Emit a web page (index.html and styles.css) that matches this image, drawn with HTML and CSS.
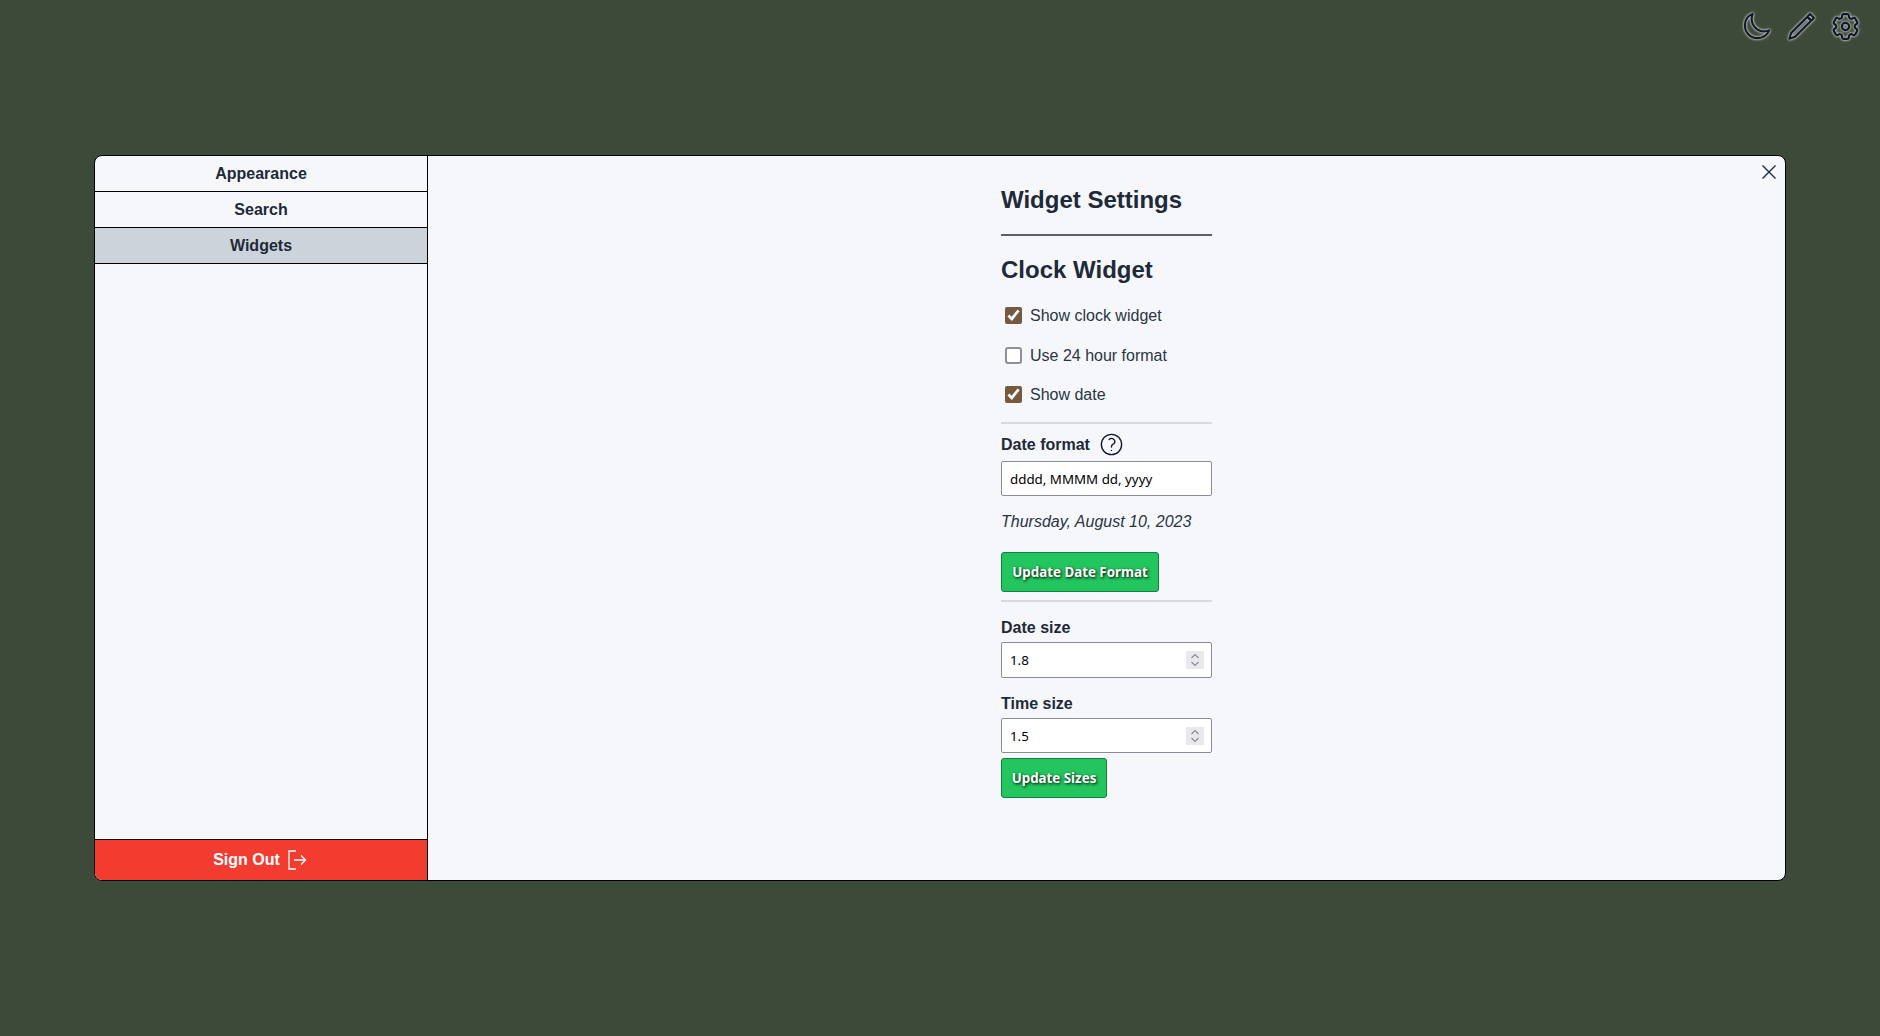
FILE: index.html
```html
<!DOCTYPE html>
<html lang="en">
<head>
<meta charset="UTF-8">
<meta name="viewport" content="width=device-width, initial-scale=1.0">
<title>Widget Settings</title>
<link rel="stylesheet" href="styles.css">
</head>
<body>

<div class="toolbar">
  <button class="tool-btn" aria-label="Dark mode">
    <svg class="moon" viewBox="0 0 24 24"><path d="M21.752 15.002A9.718 9.718 0 0118 15.75c-5.385 0-9.75-4.365-9.75-9.75 0-1.33.266-2.597.748-3.752A9.753 9.753 0 003 11.25C3 16.635 7.365 21 12.75 21a9.753 9.753 0 009.002-5.998z"/></svg>
  </button>
  <button class="tool-btn" aria-label="Edit">
    <svg class="pencil" viewBox="0 0 24 24"><path d="M18.6 2.400l3 3-1.900 1.900-3-3zM16.400 4.600l3 3L7 20l-4.400 1.400L4 17z"/></svg>
  </button>
  <button class="tool-btn" aria-label="Settings">
    <svg class="gear" viewBox="0 0 24 24"><path d="M9.594 3.94c.09-.542.56-.94 1.11-.94h2.593c.55 0 1.02.398 1.11.94l.213 1.281c.063.374.313.686.645.87.074.04.147.083.22.127.324.196.72.257 1.075.124l1.217-.456a1.125 1.125 0 011.37.49l1.296 2.247a1.125 1.125 0 01-.26 1.431l-1.003.827c-.293.24-.438.613-.431.992a6.759 6.759 0 010 .255c-.007.378.138.75.43.99l1.005.828c.424.35.534.954.26 1.43l-1.298 2.247a1.125 1.125 0 01-1.369.491l-1.217-.456c-.355-.133-.75-.072-1.076.124a6.57 6.57 0 01-.22.128c-.331.183-.581.495-.644.869l-.213 1.28c-.09.543-.56.941-1.11.941h-2.594c-.55 0-1.02-.398-1.11-.94l-.213-1.281c-.062-.374-.312-.686-.644-.87a6.52 6.52 0 01-.22-.127c-.325-.196-.72-.257-1.076-.124l-1.217.456a1.125 1.125 0 01-1.369-.49l-1.297-2.247a1.125 1.125 0 01.26-1.431l1.004-.827c.292-.24.437-.613.43-.992a6.932 6.932 0 010-.255c.007-.378-.138-.75-.43-.99l-1.004-.828a1.125 1.125 0 01-.26-1.43l1.297-2.247a1.125 1.125 0 011.37-.491l1.216.456c.356.133.751.072 1.076-.124.072-.044.146-.087.22-.128.332-.183.582-.495.644-.869l.214-1.281z"/><circle cx="12" cy="12" r="2.6"/></svg>
  </button>
</div>

<div class="modal">
  <div class="sidebar">
    <button class="side-item">Appearance</button>
    <button class="side-item">Search</button>
    <button class="side-item active">Widgets</button>
    <div class="side-space"></div>
    <button class="sign-out">
      Sign Out
      <svg viewBox="0 0 20 20"><path d="M9 1H2v18h7M7 10h11.500M14 5.500l4.500 4.500-4.500 4.500"/></svg>
    </button>
  </div>

  <div class="panel">
    <button class="close" aria-label="Close">
      <svg viewBox="0 0 16 16"><path d="M1.500 1.500l13 13M14.500 1.500l-13 13"/></svg>
    </button>

    <div class="settings">
      <h1>Widget Settings</h1>
      <hr class="rule-dark">
      <h2>Clock Widget</h2>

      <label class="check-row first"><input type="checkbox" checked> Show clock widget</label>
      <label class="check-row second"><input type="checkbox"> Use 24 hour format</label>
      <label class="check-row third"><input type="checkbox" checked> Show date</label>

      <hr class="rule-light">

      <div class="field-label with-help">
        Date format
        <svg viewBox="0 0 24 24"><path d="M9.879 7.519c1.171-1.025 3.071-1.025 4.242 0 1.172 1.025 1.172 2.687 0 3.712-.203.179-.43.326-.67.442-.745.361-1.45.999-1.45 1.827v.75M21 12a9 9 0 11-18 0 9 9 0 0118 0zm-9 5.250h.008v.008H12v-.008z"/></svg>
      </div>
      <input class="text-input date-input" type="text" value="dddd, MMMM dd, yyyy">
      <p class="date-preview">Thursday, August 10, 2023</p>
      <button class="btn-save date-btn">Update Date Format</button>

      <hr class="rule-light tight">

      <div class="field-label size-label">Date size</div>
      <div class="number-wrap">
        <input class="text-input size-input" type="number" step="0.1" value="1.8">
        <span class="spin"><svg viewBox="0 0 18 18"><path d="M5.500 7L9 3.500 12.500 7M5.500 11L9 14.500 12.500 11"/></svg></span>
      </div>
      <div class="field-label size-label">Time size</div>
      <div class="number-wrap">
        <input class="text-input size-input short" type="number" step="0.1" value="1.5">
        <span class="spin"><svg viewBox="0 0 18 18"><path d="M5.500 7L9 3.500 12.500 7M5.500 11L9 14.500 12.500 11"/></svg></span>
      </div>
      <button class="btn-save sizes-btn">Update Sizes</button>
    </div>
  </div>
</div>

</body>
</html>
```

FILE: styles.css
```css
* {
  box-sizing: border-box;
  margin: 0;
  padding: 0;
}

body {
  font-family: "Liberation Sans", Arial, sans-serif;
  display: flex;
  justify-content: center;
  align-items: center;
  height: 100vh;
  background-color: #3e4a39;
  color: #1f2937;
  overflow: hidden;
}

button {
  font: inherit;
  color: inherit;
  background: none;
  border: none;
  cursor: pointer;
}

/* Iconos de arriba a la derecha */
.toolbar {
  position: absolute;
  top: 12px;
  right: 19px;
  display: flex;
  gap: 14px;
}

.tool-btn {
  display: flex;
  width: 31px;
  height: 28px;
  align-items: center;
  justify-content: center;
}

.tool-btn svg {
  flex: none;
  width: 31px;
  height: 31px;
  fill: none;
  stroke: #111827;
  stroke-width: 1.6;
  stroke-linejoin: round;
  stroke-linecap: round;
  filter: drop-shadow(0 0 1px #d8dade) drop-shadow(0 0 1px rgba(216, 218, 222, 0.6));
}

.tool-btn .moon {
  transform: translateX(1px);
}

.tool-btn .pencil {
  transform: translateX(1px);
}

.tool-btn .gear {
  width: 33px;
  height: 33px;
}

.modal {
  display: flex;
  width: 90%;
  height: 70%;
  background-color: #f5f7fb;
  border: 1px solid #000;
  border-radius: 8px;
  overflow: hidden;
}

.sidebar {
  display: flex;
  flex-direction: column;
  width: 333px;
  border-right: 1px solid #000;
}

.side-item {
  height: 36px;
  font-size: 16px;
  font-weight: 700;
  border-bottom: 1px solid #000;
}

.side-item.active {
  background-color: #ccd3db;
}

.side-space {
  flex: 1;
}

.sign-out {
  display: flex;
  align-items: center;
  justify-content: center;
  gap: 7px;
  height: 41px;
  font-size: 16px;
  font-weight: 700;
  color: #fff;
  background-color: #f33c30;
  border-top: 1px solid #000;
}

.sign-out svg {
  width: 20px;
  height: 20px;
  margin-right: 2px;
  fill: none;
  stroke: #fff;
  stroke-width: 1.3;
}

.panel {
  flex: 1;
  position: relative;
  display: flex;
  justify-content: center;
  padding-top: 28px;
}

.close {
  position: absolute;
  top: 8px;
  right: 8px;
  width: 16px;
  height: 16px;
}

.close svg {
  display: block;
  width: 16px;
  height: 16px;
  fill: none;
  stroke: #1f2937;
  stroke-width: 1.4;
}

.settings {
  width: 211px;
}

h1,
h2 {
  font-size: 24px;
  line-height: 32px;
  font-weight: 700;
}

.rule-dark {
  height: 2px;
  margin-top: 18px;
  border: none;
  background-color: #5a6068;
}

h2 {
  margin-top: 18px;
}

.check-row {
  display: flex;
  align-items: center;
  height: 24px;
  font-size: 16px;
  color: #2b3544;
}

.check-row input {
  width: 17px;
  height: 17px;
  margin: -2px 8px 0 4px;
  accent-color: #765a3f;
}

.check-row input:not(:checked) {
  appearance: none;
  background-color: #fff;
  border: 2px solid #8f8fa0;
  border-radius: 3px;
}

.check-row.first {
  margin-top: 18px;
}

.check-row.second {
  margin-top: 16px;
}

.check-row.third {
  margin-top: 15px;
}

.rule-light {
  height: 2px;
  margin-top: 15px;
  border: none;
  background-color: #d8dade;
}

.rule-light.tight {
  margin-top: 8px;
}

.field-label {
  font-size: 16px;
  font-weight: 700;
  line-height: 24px;
}

.with-help {
  display: flex;
  align-items: center;
  height: 24px;
  margin-top: 9px;
}

.with-help svg {
  width: 27px;
  height: 27px;
  margin: -2px 0 0 8px;
  fill: none;
  stroke: #111827;
  stroke-width: 1.2;
  stroke-linecap: round;
  stroke-linejoin: round;
}

.size-label {
  margin-top: 14px;
}

.text-input {
  display: block;
  width: 100%;
  padding: 0 8px;
  font-family: "Noto Sans", sans-serif;
  font-size: 13.33px;
  color: #000;
  background-color: #fff;
  border: 1px solid #8b8b9a;
  border-radius: 2px;
}

.date-input {
  height: 35px;
  margin-top: 4px;
}

.number-wrap {
  position: relative;
  margin-top: 2px;
}

.size-input {
  height: 36px;
  appearance: textfield;
}

.size-input.short {
  height: 35px;
}

.size-input::-webkit-inner-spin-button {
  display: none;
}

.spin {
  position: absolute;
  top: 9px;
  right: 8px;
  width: 18px;
  height: 18px;
  background-color: #e9e9ed;
}

.spin svg {
  display: block;
  width: 18px;
  height: 18px;
  fill: none;
  stroke: #8a8a92;
  stroke-width: 1.1;
}

.date-preview {
  margin-top: 14px;
  font-size: 16px;
  font-style: italic;
  line-height: 24px;
  color: #2b3544;
}

.btn-save {
  display: block;
  height: 40px;
  font-family: "Noto Sans", sans-serif;
  font-size: 13.33px;
  font-weight: 700;
  color: #fff;
  text-shadow: 1px 1px 3px #000;
  background-color: #22c55e;
  border: 1px solid #15803d;
  border-radius: 3px;
}

.date-btn {
  width: 158px;
  margin-top: 18px;
}

.sizes-btn {
  width: 106px;
  margin-top: 5px;
}
```
